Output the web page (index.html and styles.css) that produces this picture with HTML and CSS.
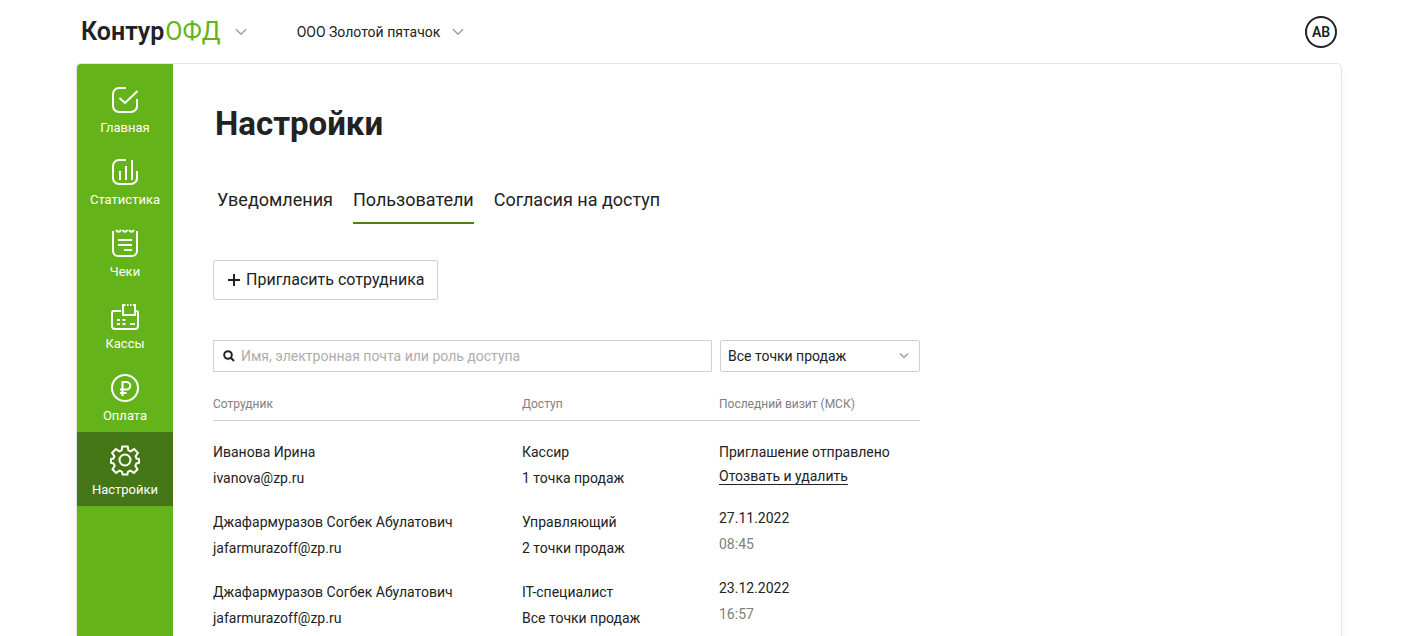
FILE: index.html
```html
<!DOCTYPE html>
<html lang="ru">
<head>
<meta charset="utf-8">
<meta name="viewport" content="width=device-width, initial-scale=1">
<title>Настройки — Контур ОФД</title>
<link rel="stylesheet" href="styles.css">
</head>
<body>
<div class="page">
  <header class="topbar">
    <button class="brand" type="button">
      <span class="logo"><span class="logo-name">Контур</span><span class="logo-product">ОФД</span></span>
      <svg class="chevron" viewBox="0 0 12 8" aria-hidden="true"><path d="M1 1.200 6 6.300 11 1.200"/></svg>
    </button>
    <button class="org" type="button">
      <span>ООО Золотой пятачок</span>
      <svg class="chevron" viewBox="0 0 12 8" aria-hidden="true"><path d="M1 1.200 6 6.300 11 1.200"/></svg>
    </button>
    <button class="avatar" type="button">АВ</button>
  </header>

  <div class="panel">
    <nav class="sidebar">
      <a class="nav-item" href="#">
        <svg class="nav-icon" viewBox="0 0 32 32" aria-hidden="true"><path d="M17 4H10a6 6 0 0 0-6 6v12a6 6 0 0 0 6 6h12a6 6 0 0 0 6-6v-7M10.500 14l5.500 5L28.500 7"/></svg>
        <span>Главная</span>
      </a>
      <a class="nav-item" href="#">
        <svg class="nav-icon" viewBox="0 0 32 32" aria-hidden="true"><path d="M17 4H10a6 6 0 0 0-6 6v12a6 6 0 0 0 6 6h12a6 6 0 0 0 6-6v-7M11 15v9M17 10v14M23 4v20"/></svg>
        <span>Статистика</span>
      </a>
      <a class="nav-item" href="#">
        <svg class="nav-icon" viewBox="0 0 32 32" aria-hidden="true"><path d="M4 3v20a5 5 0 0 0 5 5h14a5 5 0 0 0 5-5V3M9 12h14M9 17h14M15 22h8"/><path d="M7 2q2.500 3.500 5 0M13.500 2q2.500 3.500 5 0M20 2q2.500 3.500 5 0"/></svg>
        <span>Чеки</span>
      </a>
      <a class="nav-item" href="#">
        <svg class="nav-icon" viewBox="0 0 32 32" aria-hidden="true"><path d="M12 11H5a2 2 0 0 0-2 2v13a3 3 0 0 0 3 3h20a3 3 0 0 0 3-3V13a2 2 0 0 0-2-2M14 5v10h12V5"/><path d="M13 5h3.500M18 5h1.500M21 5h1.500M24 5h3M8 20h3M13.500 20h3M8 24h3M13.500 24h3M21 24h5"/></svg>
        <span>Кассы</span>
      </a>
      <a class="nav-item" href="#">
        <svg class="nav-icon" viewBox="0 0 32 32" aria-hidden="true"><circle cx="16" cy="16" r="13"/><path d="M13.500 24V10h4a3.800 3.800 0 0 1 0 7.600H11M11 21h6.500"/></svg>
        <span>Оплата</span>
      </a>
      <a class="nav-item nav-item-active" href="#" aria-current="page">
        <svg class="nav-icon" viewBox="0 0 32 32" aria-hidden="true"><circle cx="16" cy="16" r="5.500"/><path d="M13.300 2.500h5.400l.7 3.900 2.200 1 3.500-2.300 3.800 3.800-2.300 3.500 1 2.200 2.400.4v3.700l-2.700.8-1 2.400 2.200 3.400-3.600 3.600-3.500-2.200-2.300 1-.8 2.800h-4.600l-.8-2.800-2.300-1-3.500 2.200-3.600-3.600 2.200-3.400-1-2.400-2.700-.8V15l2.400-.4 1-2.200-2.300-3.500 3.800-3.800 3.500 2.300 2.200-1z"/></svg>
        <span>Настройки</span>
      </a>
    </nav>

    <main class="content">
      <h1 class="title">Настройки</h1>
      <nav class="tabs">
        <a class="tab" href="#">Уведомления</a>
        <a class="tab tab-active" href="#" aria-current="true">Пользователи</a>
        <a class="tab" href="#">Согласия на доступ</a>
      </nav>

      <section class="users">
        <button class="invite" type="button">
          <svg class="plus" viewBox="0 0 12 12" aria-hidden="true"><path d="M6 0v12M0 6h12"/></svg>
          <span>Пригласить сотрудника</span>
        </button>

        <div class="filters">
          <label class="search">
            <svg class="search-icon" viewBox="0 0 12 12" aria-hidden="true"><circle cx="5" cy="5" r="3.800"/><path d="m7.800 7.800 3.200 3.200"/></svg>
            <input class="search-input" type="text" aria-label="Поиск сотрудника" placeholder="Имя, электронная почта или роль доступа">
          </label>
          <div class="point">
            <select class="point-select" aria-label="Точка продаж"><option>Все точки продаж</option></select>
            <svg class="chevron point-chevron" viewBox="0 0 12 8" aria-hidden="true"><path d="M2 1.500 6 5.500 10 1.500"/></svg>
          </div>
        </div>

        <table class="table">
          <thead>
            <tr><th class="col-user">Сотрудник</th><th class="col-access">Доступ</th><th>Последний визит (МСК)</th></tr>
          </thead>
          <tbody>
            <tr class="row-invited">
              <td><div>Иванова Ирина</div><div>ivanova@zp.ru</div></td>
              <td><div>Кассир</div><div>1 точка продаж</div></td>
              <td><div>Приглашение отправлено</div><a class="revoke" href="#">Отозвать и удалить</a></td>
            </tr>
            <tr>
              <td><div>Джафармуразов Согбек Абулатович</div><div>jafarmurazoff@zp.ru</div></td>
              <td><div>Управляющий</div><div>2 точки продаж</div></td>
              <td class="visit"><div>27.11.2022</div><div class="time">08:45</div></td>
            </tr>
            <tr>
              <td><div>Джафармуразов Согбек Абулатович</div><div>jafarmurazoff@zp.ru</div></td>
              <td><div>IT-специалист</div><div>Все точки продаж</div></td>
              <td class="visit"><div>23.12.2022</div><div class="time">16:57</div></td>
            </tr>
          </tbody>
        </table>
      </section>
    </main>
  </div>
</div>
</body>
</html>
```

FILE: styles.css
```css
* {
  box-sizing: border-box;
}

body {
  margin: 0;
  background: #fff;
  color: #222;
  font-family: Roboto, "Noto Sans", sans-serif;
  font-size: 14px;
  line-height: 26px;
}

button,
input,
select {
  margin: 0;
  color: inherit;
  font: inherit;
}

a {
  color: inherit;
  text-decoration: none;
}

svg {
  display: block;
  fill: none;
  stroke: currentColor;
}

.page {
  display: flex;
  flex-direction: column;
  min-height: 100vh;
  padding: 0 76px;
}

.topbar {
  display: flex;
  align-items: center;
  height: 63px;
  padding: 0 5px;
}

.brand,
.org {
  display: flex;
  align-items: center;
  padding: 0;
  border: 0;
  background: none;
}

.brand {
  gap: 14px;
}

.org {
  gap: 12px;
  margin-left: 50px;
}

.logo {
  display: flex;
  gap: 1px;
  font-size: 25px;
  line-height: 32px;
}

.logo-name {
  font-weight: 600;
}

.logo-product {
  color: #64b31a;
}

.chevron {
  width: 12px;
  height: 8px;
  color: #a0a0a0;
  stroke-width: 1.5;
}

.avatar {
  width: 32px;
  height: 32px;
  margin-left: auto;
  padding: 0;
  border: 2px solid #222;
  border-radius: 50%;
  background: none;
  font-size: 14px;
  font-weight: 600;
  line-height: 28px;
}

.panel {
  display: flex;
  flex: 1;
  border: 1px solid #e4e4e4;
  border-bottom: 0;
  border-radius: 5px 5px 0 0;
  box-shadow: 0 8px 16px rgba(0, 0, 0, 0.03);
}

.sidebar {
  flex: none;
  width: 96px;
  padding-top: 8px;
  border-radius: 4px 0 0 0;
  background: #64b31a;
  color: #fff;
}

.nav-item {
  display: flex;
  flex-direction: column;
  align-items: center;
  gap: 4px;
  height: 72px;
  padding-top: 12px;
  font-size: 13px;
  line-height: 16px;
}

.nav-item-active {
  height: 74px;
  gap: 6px;
  background: #457717;
}

.nav-icon {
  width: 32px;
  height: 32px;
  stroke-width: 2;
}

.content {
  flex: 1;
  min-width: 0;
  padding: 40px;
}

.title {
  margin: 0 2px;
  font-size: 33px;
  font-weight: 700;
  line-height: 40px;
}

.tabs {
  display: flex;
  gap: 20px;
  margin: 40px 4px 0;
}

.tab {
  padding-bottom: 6px;
  border-bottom: 2px solid transparent;
  font-size: 18px;
  line-height: 32px;
}

.tab-active {
  border-bottom-color: #458117;
}

.users {
  max-width: 707px;
  margin-top: 36px;
}

.invite {
  display: flex;
  align-items: center;
  gap: 6px;
  height: 40px;
  padding: 0 13px 0 14px;
  border: 1px solid #d0d0d0;
  border-radius: 2px;
  background: #fff;
  font-size: 16px;
}

.plus {
  width: 12px;
  height: 12px;
  stroke-width: 2;
}

.filters {
  display: flex;
  gap: 8px;
  margin-top: 40px;
}

.search {
  display: flex;
  flex: 1;
  align-items: center;
  gap: 6px;
  height: 32px;
  padding: 0 9px;
  border: 1px solid #d0d0d0;
}

.search-icon {
  width: 12px;
  height: 12px;
  stroke-width: 2;
}

.search-input {
  flex: 1;
  min-width: 0;
  padding: 0;
  border: 0;
  outline: 0;
  background: none;
}

.search-input::placeholder {
  color: #adadad;
}

.point {
  position: relative;
  width: 200px;
}

.point-select {
  width: 100%;
  height: 32px;
  padding: 0 24px 0 7px;
  border: 1px solid #d0d0d0;
  border-radius: 2px;
  background: #fff;
  appearance: none;
}

.point-chevron {
  position: absolute;
  top: 12px;
  right: 10px;
  pointer-events: none;
}

.table {
  width: 100%;
  margin-top: 16px;
  border-collapse: separate;
  border-spacing: 0;
  table-layout: fixed;
}

.table th {
  padding: 0;
  border-bottom: 1px solid #d0d0d0;
  color: #808080;
  font-size: 12px;
  font-weight: 400;
  line-height: 32px;
  text-align: left;
  vertical-align: top;
}

.table .col-user {
  width: 309px;
}

.table .col-access {
  width: 197px;
}

.table td {
  height: 70px;
  padding: 4px 0 14px;
  vertical-align: top;
}

.table .row-invited td {
  height: 84px;
  padding-top: 18px;
}

.table .visit {
  padding-top: 0;
}

.revoke {
  display: block;
  width: fit-content;
  margin-top: 3px;
  border-bottom: 1px solid #222;
  line-height: 16px;
}

.time {
  color: #808080;
}
```
